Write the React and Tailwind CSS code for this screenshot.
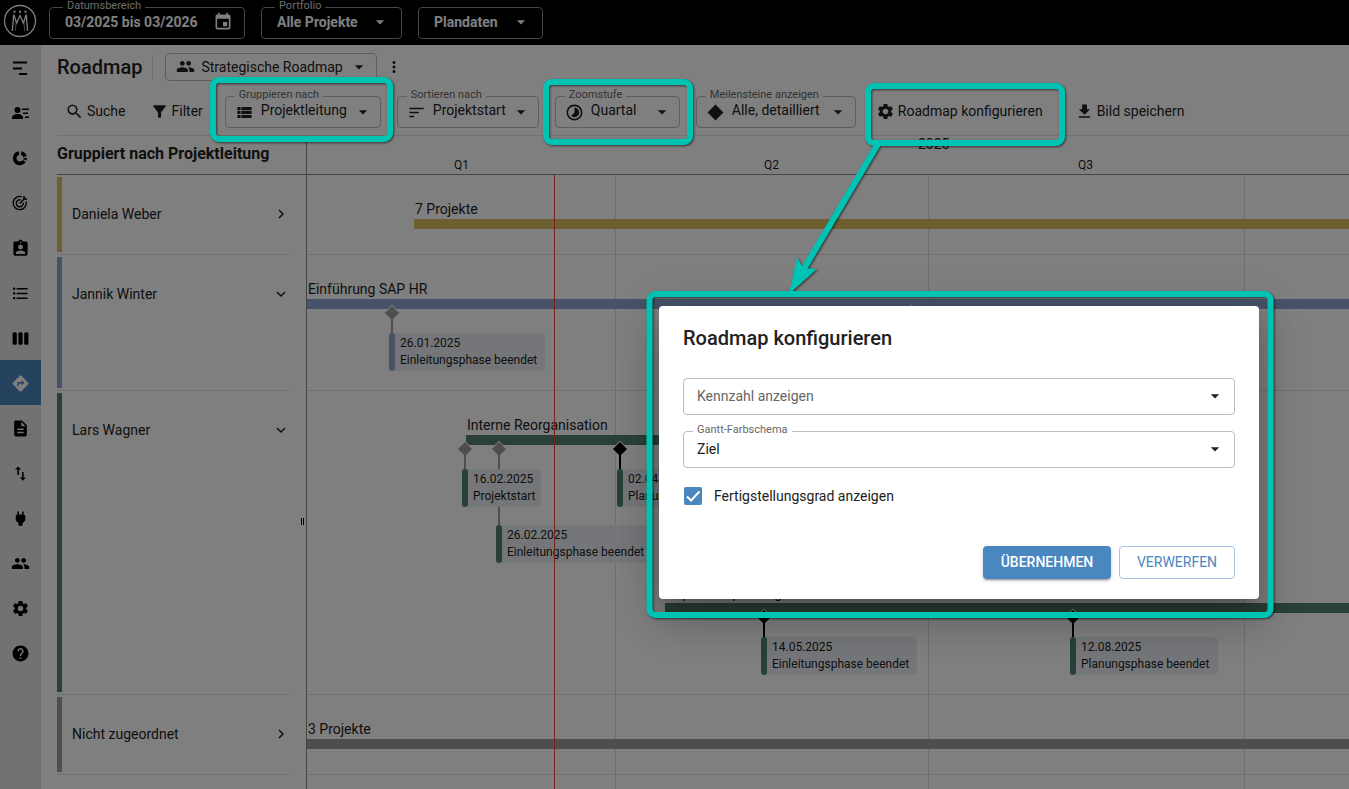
import {
  MdArrowDropDown, MdAssignmentInd, MdDescription, MdDirections, MdDownload, MdEvent,
  MdFilterAlt, MdFormatListBulleted, MdGroup, MdHelp, MdImportExport, MdKeyboardArrowDown,
  MdKeyboardArrowRight, MdMoreVert, MdPower, MdSearch, MdSettings, MdSort, MdTimelapse, MdViewList, MdViewWeek,
} from "react-icons/md"

/* Icons that the icon set lacks */
function GanttIcon() {
  return (
    <svg width="18" height="18" viewBox="0 0 18 18" stroke="currentColor" strokeWidth="2">
      <path d="M2 3.500h14M2 9.500h9M8 15h8" />
    </svg>
  )
}

function ContactsIcon() {
  return (
    <svg width="18" height="18" viewBox="0 0 18 18" fill="currentColor">
      <circle cx="6.500" cy="6" r="3" />
      <path d="M1 15v-1.500c0-2 3-3.500 5.500-3.500s5.500 1.500 5.500 3.500V15zM11 4.500h7v1.500h-7zM12 8.500h5v1.500h-5zM14 12.500h4v1.500h-4z" />
    </svg>
  )
}

function StatusIcon() {
  return (
    <svg width="18" height="18" viewBox="0 0 18 18" fill="none" stroke="currentColor" strokeWidth="3.600">
      <path d="M8 4A5.200 5.200 0 1 0 13.200 12" />
      <path d="M10.200 4A5.200 5.200 0 0 1 14 7.700" />
      <path d="M14.200 9A5.200 5.200 0 0 1 13.800 10.800" />
    </svg>
  )
}

function GoalIcon() {
  return (
    <svg width="18" height="18" viewBox="0 0 18 18" fill="none" stroke="currentColor" strokeWidth="1.400">
      <path d="M11 2.800A6.600 6.600 0 1 0 15.200 7.500" />
      <path d="M9.500 5.900A3.500 3.500 0 1 0 12.200 8.600" />
      <path d="M8.700 9.500L14 4M13 2v3h3" />
    </svg>
  )
}

function DiamondIcon({ className }) {
  return (
    <svg className={className} viewBox="0 0 18 18" fill="currentColor">
      <path d="M9 1.500L16.500 9L9 16.500L1.500 9z" />
    </svg>
  )
}

const navItems = [
  { name: "Gantt", icon: GanttIcon },
  { name: "Ressourcen", icon: ContactsIcon },
  { name: "Status", icon: StatusIcon },
  { name: "Ziele", icon: GoalIcon },
  { name: "Projektsteckbrief", icon: MdAssignmentInd },
  { name: "Liste", icon: MdFormatListBulleted },
  { name: "Board", icon: MdViewWeek },
  { name: "Roadmap", icon: MdDirections, active: true },
  { name: "Berichte", icon: MdDescription },
  { name: "Import und Export", icon: MdImportExport },
  { name: "Integrationen", icon: MdPower },
  { name: "Benutzer", icon: MdGroup },
  { name: "Einstellungen", icon: MdSettings },
  { name: "Hilfe", icon: MdHelp },
]

const groups = [
  { name: "Daniela Weber", height: "h-20", color: "bg-[#debc60]" },
  { name: "Jannik Winter", height: "h-[136px]", color: "bg-[#8ca5ce]", open: true },
  { name: "Lars Wagner", height: "h-[304px]", color: "bg-[#54806d]", open: true },
  { name: "Nicht zugeordnet", height: "h-20", color: "bg-[#9c9c9c]" },
]

function HeaderField({ label, value, icon: Icon = MdArrowDropDown, width }) {
  return (
    <div className={`relative h-8 ${width}`}>
      {label && (
        <span className="absolute -top-[7px] left-3.5 bg-black px-1 text-[11px] leading-3 text-[#d8d8d8]">{label}</span>
      )}
      <button aria-label={label} className="flex h-full w-full items-center justify-between rounded border border-[#8c8c8c] pb-0.5 pl-[15px] pr-[11px] text-sm font-bold">
        {value}
        <Icon className="size-5" />
      </button>
    </div>
  )
}

function ToolbarSelect({ id, label, value, icon: Icon, width }) {
  return (
    <div className={`relative h-8 shrink-0 ${width}`}>
      <label htmlFor={id} className="absolute -top-[7px] left-2.5 bg-white px-1 text-[11px] leading-3 text-[#666]">{label}</label>
      <Icon className="pointer-events-none absolute left-2.5 top-[7px] size-[19px]" />
      <select id={id} className="h-full w-full appearance-none rounded border border-[#bdbdbd] pb-1 pl-[35px] text-sm">
        <option>{value}</option>
      </select>
      <MdArrowDropDown className="pointer-events-none absolute right-2 top-1.5 size-5" />
    </div>
  )
}

function Milestone({ place, date, name, stem = "h-3.5", width, color, dark }) {
  return (
    <div className={`absolute ${place}`}>
      <svg className="relative z-10 -ml-2 block overflow-visible" width="16" height="16" viewBox="0 0 16 16">
        <path d="M8 -0.500L16.500 8L8 16.500L-0.500 8z" fill="#fff" fillOpacity="0.800" />
        <path d="M8 1L15 8L8 15L1 8z" fill={dark ? "#000" : "#9c9c9c"} />
      </svg>
      <div className={`relative z-10 -ml-px -mt-0.5 w-0.5 ${stem} ${dark ? "bg-black" : "bg-[#9c9c9c]"}`}></div>
      <div className={`relative z-10 -ml-[3px] h-[38px] ${width} rounded bg-[#e9edf3] pl-[11px] pt-0.5 text-xs leading-[17px] whitespace-nowrap`}>
        <div className={`absolute inset-y-0 left-0 w-1.5 rounded-full ${color}`}></div>
        <p>{date}</p>
        <p>{name}</p>
      </div>
    </div>
  )
}

function Header() {
  return (
    <header className="flex h-[45px] items-start bg-black text-white">
      <svg className="ml-1 mt-1 mr-3" width="33" height="34" viewBox="0 0 33 34" fill="none" stroke="#fff">
        <circle cx="16" cy="17" r="15.500" strokeWidth="1.300" />
        <path d="M8.300 27L9.700 10.500L12.700 19L16 11.500L19.300 19L22.300 10.500L23.500 27" strokeWidth="1.300" />
        <path d="M12 17L11.500 27M20 17L20.500 27" strokeWidth="0.800" strokeOpacity="0.700" />
        <path d="M9.500 7.700h2M15 7.700h2M20.500 7.700h2" strokeWidth="2" />
      </svg>
      <div className="mt-[7px] flex gap-4">
        <HeaderField label="Datumsbereich" value="03/2025 bis 03/2026" icon={MdEvent} width="w-[196px]" />
        <HeaderField label="Portfolio" value="Alle Projekte" width="w-[141px]" />
        <HeaderField value="Plandaten" width="w-[125px]" />
      </div>
    </header>
  )
}

function Sidebar() {
  return (
    <nav className="w-[41px] shrink-0 bg-[#e4e4e4]">
      {navItems.map(({ name, icon: Icon, active }) => (
        <a key={name} href="#" aria-label={name} className={`flex h-[45px] items-center justify-center pr-px pt-px text-[19px] ${active ? "bg-[#4a86bf] text-white" : ""}`}>
          <Icon />
        </a>
      ))}
    </nav>
  )
}

function Toolbar() {
  return (
    <div className="flex h-[51px] items-start border-b border-[#e0e0e0] pt-[11px]">
      <button className="ml-2 flex h-[30px] items-center gap-[3px] text-sm"><MdSearch className="size-[19px]" />Suche</button>
      <button className="ml-6 flex h-[30px] items-center gap-[3px] text-sm"><MdFilterAlt className="size-[19px]" />Filter</button>
      <div className="ml-[22px] flex gap-4">
        <ToolbarSelect id="group" label="Gruppieren nach" value="Projektleitung" icon={MdViewList} width="w-[156px]" />
        <ToolbarSelect id="sort" label="Sortieren nach" value="Projektstart" icon={MdSort} width="w-[142px]" />
        <ToolbarSelect id="zoom" label="Zoomstufe" value="Quartal" icon={MdTimelapse} width="w-[125px]" />
        <ToolbarSelect id="milestones" label="Meilensteine anzeigen" value="Alle, detailliert" icon={DiamondIcon} width="w-40" />
      </div>
      <button className="ml-5 flex h-[30px] items-center gap-[3px] text-sm"><MdSettings className="size-[19px]" />Roadmap konfigurieren</button>
      <button className="ml-8 flex h-[30px] items-center gap-[3px] text-sm"><MdDownload className="size-[19px]" />Bild speichern</button>
    </div>
  )
}

function GroupList() {
  return (
    <div className="relative w-[249px] shrink-0">
      <h2 className="h-[39px] border-b border-[#8c8c8c] pt-1.5 text-base font-bold">Gruppiert nach Projektleitung</h2>
      {groups.map(({ name, height, color, open }) => (
        <div key={name} className={`mr-4 flex border-b border-[#e0e0e0] pb-0.5 pt-0.5 ${height}`}>
          <div className={`w-[5px] shrink-0 ${color}`}></div>
          <div className="flex h-[74px] flex-1 items-center justify-between pl-2.5 text-sm">
            {name}
            <button aria-label={name}>{open ? <MdKeyboardArrowDown className="size-[18px]" /> : <MdKeyboardArrowRight className="size-[18px]" />}</button>
          </div>
        </div>
      ))}
      <div className="absolute right-[2px] top-[382px] h-[7px] w-[3px] border-x border-black"></div>
    </div>
  )
}

function Timeline() {
  return (
    <div className="relative flex-1 overflow-hidden border-l border-[#8c8c8c]">
      <div className="relative h-[39px] border-b border-[#8c8c8c] text-xs">
        <span className="absolute left-[611px] top-0 text-sm leading-4">2025</span>
        <span className="absolute left-[147px] top-[21px]">Q1</span>
        <span className="absolute left-[457px] top-[21px]">Q2</span>
        <span className="absolute left-[771px] top-[21px]">Q3</span>
      </div>
      <div className="relative">
        <div className="absolute left-[308px] h-[640px] w-px bg-[#e0e0e0]"></div>
        <div className="absolute left-[621px] h-[640px] w-px bg-[#e0e0e0]"></div>
        <div className="absolute left-[937px] h-[640px] w-px bg-[#e0e0e0]"></div>

        {/* Daniela Weber */}
        <div className="relative h-20 border-b border-[#e0e0e0]">
          <p className="absolute left-[108px] top-6 text-sm">7 Projekte</p>
          <div className="absolute left-[107px] right-0 top-11 h-2.5 bg-[#debc60]"></div>
        </div>

        {/* Jannik Winter */}
        <div className="relative h-[136px] border-b border-[#e0e0e0]">
          <p className="absolute left-px top-6 text-sm">Einführung SAP HR</p>
          <div className="absolute inset-x-0 top-11 h-2.5 bg-[#8ca5ce]"></div>
          <Milestone place="left-[85px] top-[50px]" date="26.01.2025" name="Einleitungsphase beendet" width="w-[156px]" color="bg-[#8ca5ce]" />
          <Milestone place="left-[604px] top-[50px]" date="30.06.2025" name="Planungsphase beendet" width="w-[148px]" color="bg-[#8ca5ce]" />
        </div>

        {/* Lars Wagner */}
        <div className="relative h-[304px] border-b border-[#e0e0e0]">
          <p className="absolute left-40 top-6 text-sm">Interne Reorganisation</p>
          <div className="absolute left-[159px] top-11 h-2.5 w-80 bg-[#54806d]"></div>
          <Milestone place="left-[192px] top-[50px]" stem="h-[70px]" date="26.02.2025" name="Einleitungsphase beendet" width="w-[156px]" color="bg-[#54806d]" />
          <Milestone place="left-[158px] top-[50px]" date="16.02.2025" name="Projektstart" width="w-[79px]" color="bg-[#54806d]" />
          <Milestone place="left-[313px] top-[50px]" date="02.04.2025" name="Planung" width="w-[148px]" color="bg-[#54806d]" dark />
          <p className="absolute left-[359px] top-48 text-sm">Kapazitätsplanung einführen</p>
          <div className="absolute left-[358px] right-0 top-[212px] h-2.5 bg-[#54806d]"></div>
          <Milestone place="left-[457px] top-[218px]" date="14.05.2025" name="Einleitungsphase beendet" width="w-[156px]" color="bg-[#54806d]" dark />
          <Milestone place="left-[766px] top-[218px]" date="12.08.2025" name="Planungsphase beendet" width="w-[148px]" color="bg-[#54806d]" dark />
        </div>

        {/* Nicht zugeordnet */}
        <div className="relative h-20 border-b border-[#e0e0e0]">
          <p className="absolute left-px top-6 text-sm">3 Projekte</p>
          <div className="absolute inset-x-0 top-11 h-2.5 bg-[#9c9c9c]"></div>
        </div>

        {/* Today */}
        <div className="absolute left-[247px] top-0 z-20 h-[640px] w-px bg-[#f44336]"></div>
      </div>
    </div>
  )
}

function ConfigDialog() {
  return (
    <div role="dialog" aria-labelledby="dialog-title" className="absolute left-[659px] top-[306px] w-[600px] rounded bg-white p-6 pb-5 text-[#212121] shadow-[0_11px_15px_-7px_rgba(0,0,0,0.2),0_24px_38px_3px_rgba(0,0,0,0.14),0_9px_46px_8px_rgba(0,0,0,0.12)]">
      <h2 id="dialog-title" className="text-xl leading-4 font-medium">Roadmap konfigurieren</h2>

      <div className="relative mt-8 h-[37px]">
        <select aria-label="Kennzahl anzeigen" className="h-full w-full appearance-none rounded border border-[#bdbdbd] px-[13px] pb-0.5 text-sm text-[#666]">
          <option>Kennzahl anzeigen</option>
        </select>
        <MdArrowDropDown className="pointer-events-none absolute right-2.5 top-2 size-5" />
      </div>

      <div className="relative mt-4 h-[37px]">
        <label htmlFor="scheme" className="absolute -top-[7px] left-2.5 bg-white px-1 text-[11px] leading-3 text-[#666]">Gantt-Farbschema</label>
        <select id="scheme" className="h-full w-full appearance-none rounded border border-[#bdbdbd] px-[13px] pb-0.5 text-sm">
          <option>Ziel</option>
        </select>
        <MdArrowDropDown className="pointer-events-none absolute right-2.5 top-2 size-5" />
      </div>

      <label className="mt-[18px] flex h-5 items-center gap-3 text-sm">
        <span className="relative ml-px size-[18px]">
          <input type="checkbox" defaultChecked className="block size-[18px] appearance-none rounded-xs bg-[#4a86bf]" />
          <svg className="pointer-events-none absolute inset-0" width="18" height="18" viewBox="0 0 18 18" fill="none" stroke="#fff" strokeWidth="2">
            <path d="M3 9.500L7 13.500L15.500 4.500" />
          </svg>
        </span>
        Fertigstellungsgrad anzeigen
      </label>

      <div className="mt-10 flex justify-end gap-2 text-sm">
        <button className="h-[33px] w-32 rounded bg-[#4a86bf] pb-0.5 font-medium text-white shadow-[0_3px_1px_-2px_rgba(0,0,0,0.2),0_2px_2px_0_rgba(0,0,0,0.14),0_1px_5px_0_rgba(0,0,0,0.12)]">ÜBERNEHMEN</button>
        <button className="h-[33px] w-[116px] rounded border border-[#a4c2df] pb-0.5 text-[#4a86bf]">VERWERFEN</button>
      </div>
    </div>
  )
}

/* Teal frames and the arrow that point at the settings */
function Annotations() {
  return (
    <svg className="pointer-events-none absolute left-0 top-0" width="1349" height="789" viewBox="0 0 1349 789" fill="none">
      <g stroke="#00c4b3" strokeWidth="6" style={{ filter: "drop-shadow(1px 1px 1px rgb(0 0 0 / 0.6))" }}>
        <rect x="213" y="80" width="177" height="59" rx="6" />
        <rect x="546" y="82" width="144" height="60" rx="6" />
        <rect x="868" y="86" width="194" height="57" rx="6" />
        <rect x="649.500" y="294" width="621" height="321" rx="6" />
        <path d="M878 144L802 272" />
        <path d="M789 294L797 257L803 268L817 269z" fill="#00c4b3" stroke="none" />
      </g>
    </svg>
  )
}

function App() {
  return (
    <div className="relative h-screen overflow-hidden bg-white font-[Roboto,sans-serif] text-black">
      <div className="isolate flex h-full flex-col">
        <Header />
        <div className="flex min-h-0 flex-1">
          <Sidebar />
          <main className="flex min-w-0 flex-1 flex-col pl-4 text-[#212121]">
            <div className="flex h-10 items-center pt-[3px]">
              <h1 className="text-xl font-medium">Roadmap</h1>
              <div className="ml-2.5 h-6 border-l border-[#e0e0e0]"></div>
              <button className="ml-3 flex h-7 w-[212px] items-center gap-1.5 rounded border border-[#bdbdbd] pl-2.5 text-sm">
                <MdGroup className="size-[19px]" />
                Strategische Roadmap
                <MdArrowDropDown className="size-5" />
              </button>
              <button aria-label="Mehr" className="ml-2"><MdMoreVert className="size-[18px]" /></button>
            </div>
            <Toolbar />
            <div className="flex min-h-0 flex-1">
              <GroupList />
              <Timeline />
            </div>
          </main>
        </div>
      </div>
      <div className="absolute inset-0 bg-black/50"></div>
      <ConfigDialog />
      <Annotations />
    </div>
  )
}

export default App
